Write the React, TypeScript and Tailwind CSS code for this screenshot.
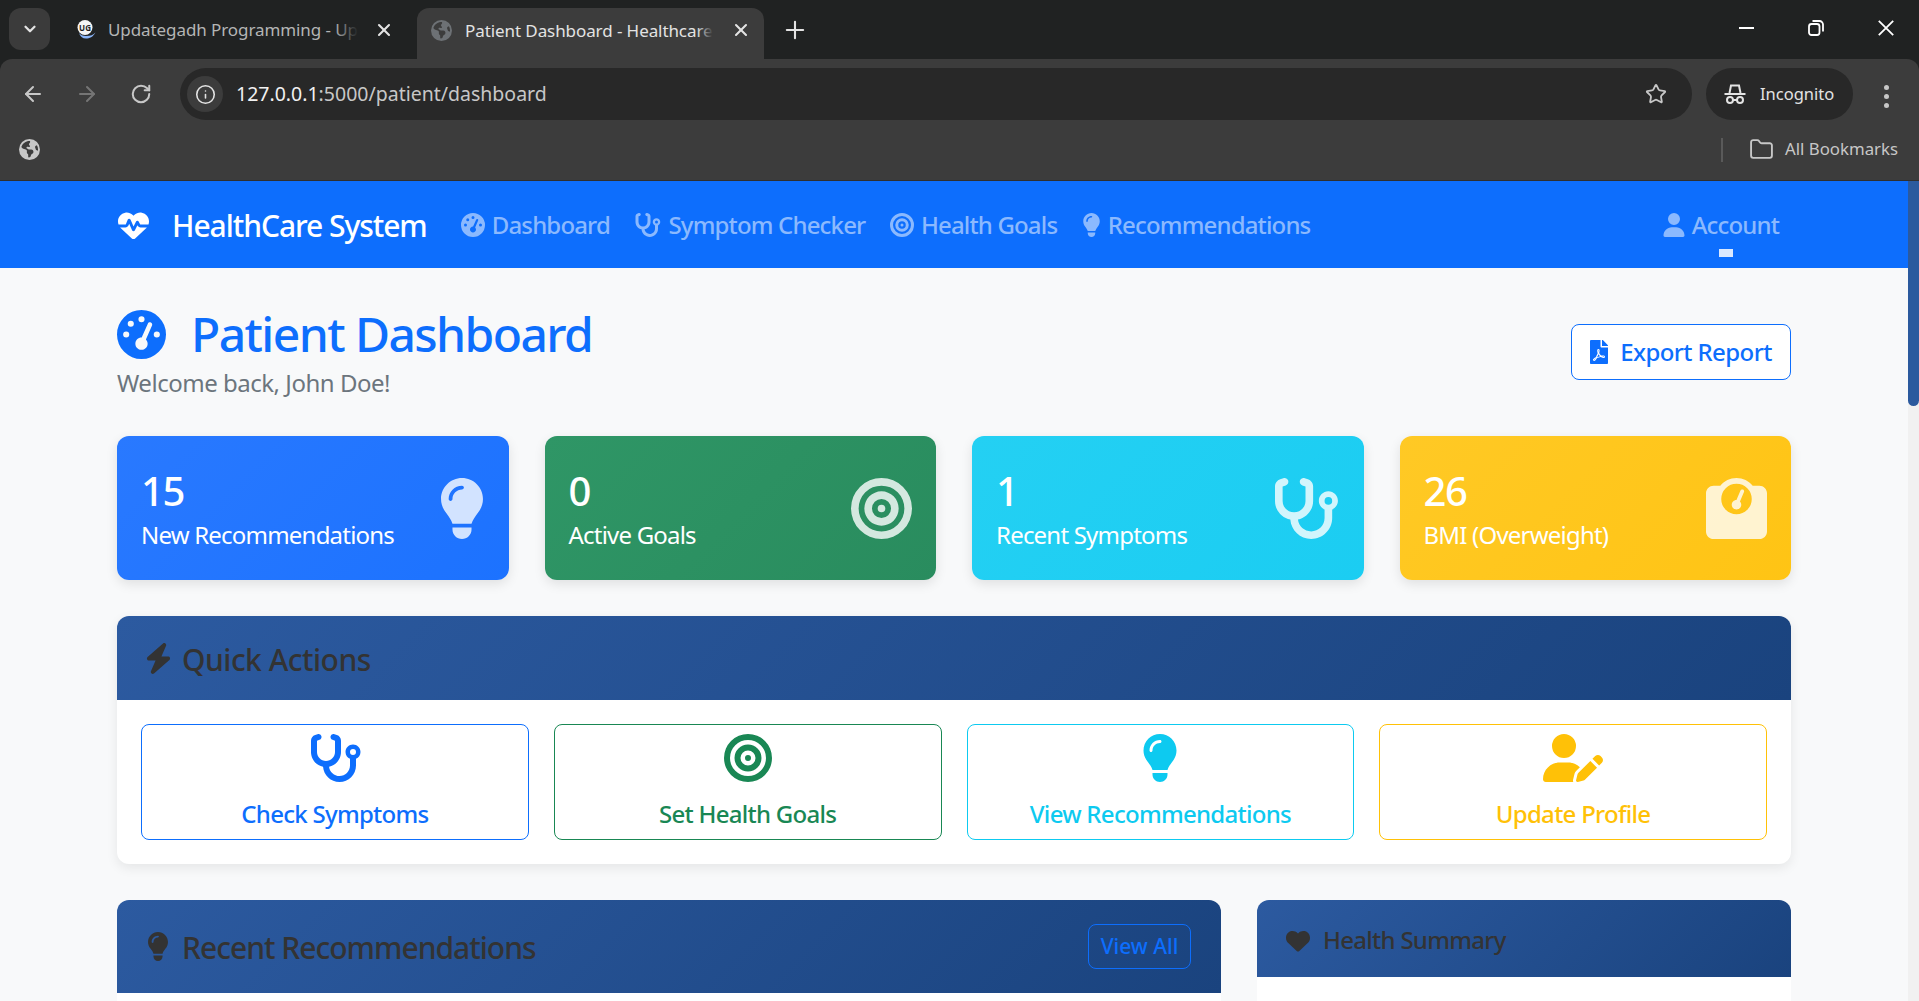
import { ArrowLeft, ArrowRight, ChevronDown, Folder, Info, Plus, RotateCw, Star, X } from "lucide-react";
import { FaFilePdf } from "react-icons/fa";
import {
  FaBolt,
  FaBullseye,
  FaEarthAmericas,
  FaGaugeHigh,
  FaHeart,
  FaHeartPulse,
  FaLightbulb,
  FaStethoscope,
  FaUser,
  FaUserPen,
  FaWeightScale,
} from "react-icons/fa6";

const uiFont = "font-['Noto_Sans',sans-serif]";

function TabFavicon() {
  return (
    <svg viewBox="0 0 20 20" className="h-[20px] w-[20px] shrink-0">
      <path d="M3 13c1 3.500 3.500 5.500 7 5.500s7-1.500 9.500-6c-2 2.500-5 3.500-9.500 3.500-3 0-5.500-1-7-3z" fill="#8ab4f8" />
      <circle cx="9" cy="7.500" r="7.500" fill="#f5f5f5" />
      <text x="9" y="10.500" textAnchor="middle" fontSize="8" fontWeight="700" fill="#222" fontFamily="Noto Sans, sans-serif">
        UG
      </text>
    </svg>
  );
}

function IncognitoIcon() {
  return (
    <svg viewBox="0 0 24 24" className="h-[24px] w-[24px]" fill="none" stroke="#e3e3e3" strokeWidth="2">
      <path d="M6.500 11 8 3.500h8L17.500 11" />
      <path d="M1.500 12h21" />
      <circle cx="7" cy="18" r="3" />
      <circle cx="17" cy="18" r="3" />
      <path d="M10 18h4" />
    </svg>
  );
}

function BrowserChrome() {
  return (
    <div className={`${uiFont} shrink-0 bg-[#202222]`}>
      <div className="flex h-[59px] items-start pl-[9px] pt-[8px]">
        <div className="flex h-[42px] w-[41px] items-center justify-center rounded-[12px] bg-[#3b3b3b]">
          <ChevronDown size={18} strokeWidth={3} className="text-[#e3e3e3]" />
        </div>
        <div className="flex h-[44px] w-[367px] items-center pl-[26px]">
          <TabFavicon />
          <div className="relative ml-[12px] w-[250px] overflow-hidden whitespace-nowrap text-[17px] tracking-[-0.005em] text-[#b4b5b5]">
            Updategadh Programming - Updategadh
            <span className="absolute inset-y-0 right-0 w-[24px] bg-gradient-to-l from-[#202222] to-transparent" />
          </div>
          <X size={20} strokeWidth={2.500} className="ml-[16px] text-[#e3e3e3]" />
        </div>
        <div className="flex h-[51px] w-[347px] items-start rounded-t-[12px] bg-[#3c3c3c] pl-[14px] pt-[12px]">
          <FaEarthAmericas className="h-[21px] w-[21px] shrink-0 text-[#6d7175]" />
          <div className="relative ml-[13px] mt-[-2px] w-[248px] overflow-hidden whitespace-nowrap text-[17px] tracking-[-0.005em] text-[#e3e3e3]">
            Patient Dashboard - Healthcare System
            <span className="absolute inset-y-0 right-0 w-[16px] bg-gradient-to-l from-[#3c3c3c] to-transparent" />
          </div>
          <X size={20} strokeWidth={2.500} className="ml-[18px] text-[#e3e3e3]" />
        </div>
        <Plus size={28} strokeWidth={1.800} className="ml-[17px] mt-[8px] text-[#e3e3e3]" />
        <div className="ml-auto mr-[25px] mt-[12px] flex items-center gap-[54px]">
          <svg viewBox="0 0 15 2" className="h-[2px] w-[15px]">
            <rect width="15" height="2" fill="#fff" />
          </svg>
          <svg viewBox="0 0 16 16" className="h-[16px] w-[16px]" fill="none" stroke="#fff" strokeWidth="1.800">
            <rect x="1" y="4" width="10.500" height="11" rx="2.500" />
            <path d="M4.500 1h7a3.500 3.500 0 0 1 3.500 3.500v7" />
          </svg>
          <svg viewBox="0 0 16 16" className="h-[16px] w-[16px]" fill="none" stroke="#fff" strokeWidth="1.800">
            <path d="M.8.800l14.400 14.400M15.200.800.8 15.200" />
          </svg>
        </div>
      </div>

      <div className="rounded-t-[12px] bg-[#3c3c3c]">
        <div className="flex h-[63px] items-start pt-[9px]">
          <ArrowLeft size={24} strokeWidth={2} className="ml-[21px] mt-[14px] text-[#c7c7c7]" />
          <ArrowRight size={24} strokeWidth={2} className="ml-[30px] mt-[14px] text-[#757575]" />
          <RotateCw size={22} strokeWidth={2.200} className="ml-[31px] mt-[15px] text-[#c7c7c7]" />
          <div className="ml-[28px] flex h-[52px] w-[1512px] items-center rounded-full bg-[#282828] pl-[7px]">
            <div className="flex h-[36px] w-[36px] items-center justify-center rounded-full bg-[#3c3c3c]">
              <Info size={21} strokeWidth={1.800} className="text-[#e3e3e3]" />
            </div>
            <span className="ml-[13px] text-[19.500px] text-[#c7c7c7]">
              <span className="text-[#f1f1f1]">127.0.0.1</span>:5000/patient/dashboard
            </span>
            <Star size={22} strokeWidth={2} className="ml-auto mr-[25px] text-[#c7c7c7]" />
          </div>
          <div className="ml-[14px] flex h-[52px] w-[147px] items-center rounded-full bg-[#282828] pl-[17px]">
            <IncognitoIcon />
            <span className="ml-[13px] text-[16.500px] text-[#e3e3e3]">Incognito</span>
          </div>
          <div className="ml-[31px] mt-[17px] flex flex-col gap-[4px]">
            <span className="h-[5px] w-[5px] rounded-full bg-[#c7c7c7]" />
            <span className="h-[5px] w-[5px] rounded-full bg-[#c7c7c7]" />
            <span className="h-[5px] w-[5px] rounded-full bg-[#c7c7c7]" />
          </div>
        </div>
        <div className="flex h-[59px] items-center border-b border-[#2f2f2f] pb-[3px] pl-[19px]">
          <FaEarthAmericas className="h-[21px] w-[21px] text-[#c7c7c7]" />
          <div className="ml-auto h-[24px] w-[2px] bg-[#5a5a5a]" />
          <Folder size={25} strokeWidth={1.800} className="ml-[26px] text-[#c7c7c7]" />
          <span className="ml-[11px] mr-[21px] mt-[-2px] text-[16.800px] text-[#c7c7c7]">All Bookmarks</span>
        </div>
      </div>
    </div>
  );
}

function NavItem({ icon, label }: { icon: React.ReactNode; label: string }) {
  return (
    <div className="flex items-center gap-[7px] text-[#8bb9fe]">
      {icon}
      <span>{label}</span>
    </div>
  );
}

function Navbar() {
  return (
    <nav className="flex h-[87px] shrink-0 items-center bg-[#0d6efd] pl-[118px] pr-[129px] text-[24px] font-medium tracking-[-0.035em]">
      <FaHeartPulse className="mt-[2px] h-[31px] w-[31px] text-white" />
      <span className="ml-[23px] mr-[34px] mt-[2px] text-[30px] font-medium tracking-[-0.035em] text-white">HealthCare System</span>
      <div className="flex items-center gap-[24.500px]">
        <NavItem icon={<FaGaugeHigh className="h-[24px] w-[24px]" />} label="Dashboard" />
        <NavItem icon={<FaStethoscope className="h-[24px] w-[27px]" />} label="Symptom Checker" />
        <NavItem icon={<FaBullseye className="h-[24px] w-[24px]" />} label="Health Goals" />
        <NavItem icon={<FaLightbulb className="h-[24px] w-[19px]" />} label="Recommendations" />
      </div>
      <div className="relative ml-auto">
        <NavItem icon={<FaUser className="h-[24px] w-[22px]" />} label="Account" />
        <span className="absolute left-[56px] top-[42px] h-[8px] w-[14px] bg-[#dbe9ff]" />
      </div>
    </nav>
  );
}

const stats = [
  { value: "15", label: "New Recommendations", bg: "bg-[linear-gradient(135deg,#2979ff,#1c72ff)]", icon: <FaLightbulb className="h-[61px] w-[46px]" /> },
  { value: "0", label: "Active Goals", bg: "bg-[linear-gradient(135deg,#2f9666,#298c5e)]", icon: <FaBullseye className="h-[61px] w-[61px]" /> },
  { value: "1", label: "Recent Symptoms", bg: "bg-[linear-gradient(135deg,#24d0f3,#1bcdf2)]", icon: <FaStethoscope className="h-[61px] w-[69px]" /> },
  { value: "26", label: "BMI (Overweight)", bg: "bg-[linear-gradient(135deg,#ffc925,#ffc414)]", icon: <FaWeightScale className="h-[61px] w-[61px]" /> },
];

const actions = [
  { label: "Check Symptoms", cls: "border-[#0d6efd] text-[#0d6efd]", icon: <FaStethoscope className="h-[48px] w-[54px]" /> },
  { label: "Set Health Goals", cls: "border-[#198754] text-[#198754]", icon: <FaBullseye className="h-[48px] w-[48px]" /> },
  { label: "View Recommendations", cls: "border-[#0dcaf0] text-[#0dcaf0]", icon: <FaLightbulb className="h-[48px] w-[36px]" /> },
  { label: "Update Profile", cls: "border-[#ffc107] text-[#ffc107]", icon: <FaUserPen className="h-[48px] w-[60px]" /> },
];

const headerBg = "bg-[linear-gradient(135deg,#2c5aa0,#1a437e)]";

function Dashboard() {
  return (
    <div className="px-[117px] pt-[36px]">
      <div className="mb-[38px] flex items-center justify-between">
        <div>
          <h1 className="flex items-center text-[48px] font-medium leading-[60px] tracking-[-0.033em] text-[#0d6efd]">
            <FaGaugeHigh className="mr-[25px] h-[49px] w-[49px]" />
            Patient Dashboard
          </h1>
          <p className="mt-[4px] text-[24px] leading-[30px] tracking-[-0.02em] text-[#6c757d]">Welcome back, John Doe!</p>
        </div>
        <button className="mt-[2px] flex h-[56px] w-[220px] items-center justify-center gap-[12px] rounded-[8px] border border-[#0d6efd] bg-white text-[24px] font-medium tracking-[-0.025em] text-[#0d6efd]">
          <FaFilePdf className="h-[24px] w-[18px]" />
          Export Report
        </button>
      </div>

      <div className="mb-[36px] grid grid-cols-4 gap-[36px]">
        {stats.map((s) => (
          <div
            key={s.label}
            className={`flex h-[144px] items-center justify-between rounded-[12px] px-[24px] text-white shadow-[0_4px_12px_rgba(0,0,0,0.1)] ${s.bg}`}
          >
            <div>
              <div className="text-[40px] font-medium leading-[48px] tracking-[-0.033em]">{s.value}</div>
              <div className="mt-[5px] text-[24px] leading-[30px] tracking-[-0.033em]">{s.label}</div>
            </div>
            <div className="opacity-80">{s.icon}</div>
          </div>
        ))}
      </div>

      <section className="mb-[36px] overflow-hidden rounded-[12px] bg-white shadow-[0_4px_12px_rgba(0,0,0,0.08)]">
        <div className={`flex h-[84px] items-center pl-[28px] text-[#333] ${headerBg}`}>
          <FaBolt className="h-[31px] w-[27px]" />
          <h2 className="ml-[10px] mt-[2px] text-[30px] font-medium tracking-[-0.017em]">Quick Actions</h2>
        </div>
        <div className="grid grid-cols-4 gap-[25px] p-[24px]">
          {actions.map((a) => (
            <div key={a.label} className={`flex h-[116px] flex-col items-center rounded-[8px] border bg-white pt-[9px] ${a.cls}`}>
              {a.icon}
              <span className="mt-[16px] text-[24px] font-medium leading-[32px] tracking-[-0.03em]">{a.label}</span>
            </div>
          ))}
        </div>
      </section>

      <div className="flex gap-[36px]">
        <section className="w-[1104px] overflow-hidden rounded-t-[12px] bg-white">
          <div className={`flex h-[93px] items-center pl-[30px] pr-[30px] text-[#333] ${headerBg}`}>
            <FaLightbulb className="h-[29px] w-[22px]" />
            <h2 className="ml-[13px] mt-[2px] text-[30px] font-medium tracking-[-0.033em]">Recent Recommendations</h2>
            <button className="ml-auto h-[45px] w-[103px] rounded-[8px] border border-[#0d6efd] pt-[1px] text-[21px] font-medium text-[#0d6efd]">
              View All
            </button>
          </div>
          <div className="h-[8px]" />
        </section>
        <section className="flex-1 overflow-hidden rounded-t-[12px] bg-white">
          <div className={`flex h-[77px] items-start pl-[29px] pt-[24px] text-[#333] ${headerBg}`}>
            <FaHeart className="mt-[5px] h-[24px] w-[24px]" />
            <h2 className="ml-[13px] text-[24px] font-medium leading-[32px] tracking-[-0.03em]">Health Summary</h2>
          </div>
          <div className="h-[24px]" />
        </section>
      </div>
    </div>
  );
}

export default function App() {
  return (
    <div className={`${uiFont} flex h-[1001px] w-[1919px] flex-col overflow-hidden bg-[#f8f9fa]`}>
      <BrowserChrome />
      <div className="flex min-h-0 flex-1">
        <div className="min-w-0 flex-1 overflow-hidden">
          <Navbar />
          <Dashboard />
        </div>
        <div className="h-full w-[11px] shrink-0 bg-[#f1f1f1]">
          <div className="h-[225px] rounded-b-[6px] bg-[#2b5a9e]" />
        </div>
      </div>
    </div>
  );
}
